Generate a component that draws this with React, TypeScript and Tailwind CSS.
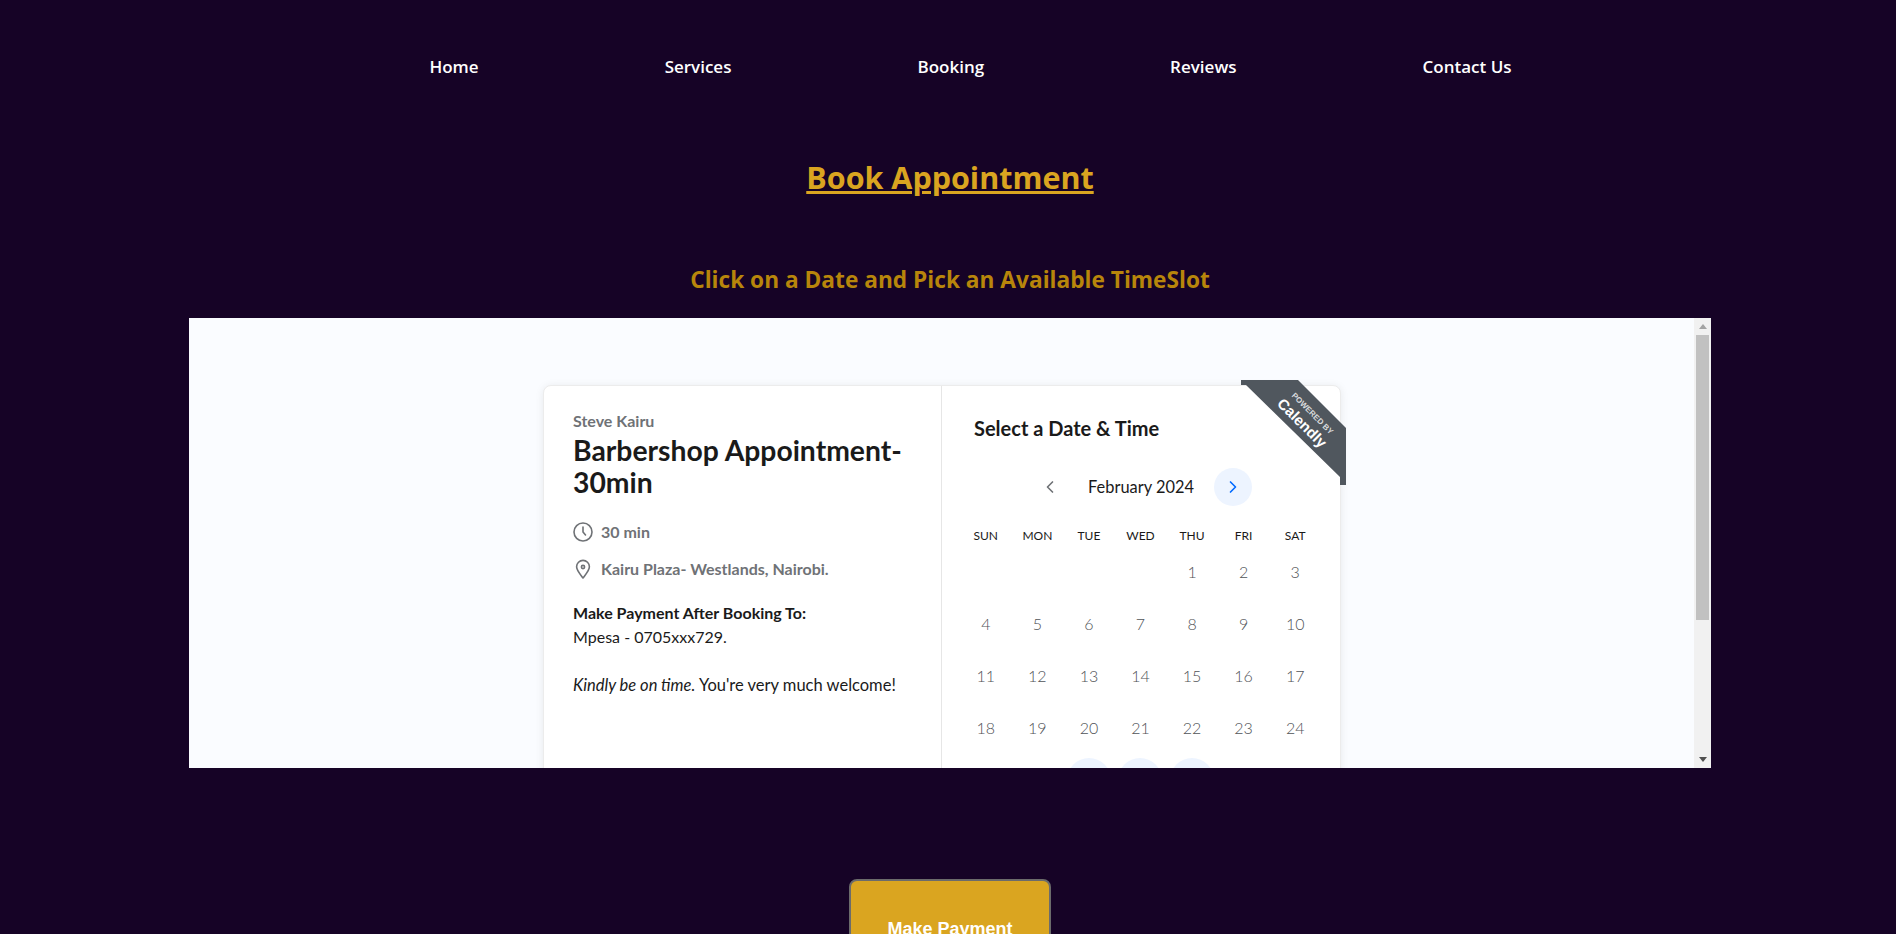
import { ChevronLeft, ChevronRight } from 'lucide-react';

const navLinks = ['Home', 'Services', 'Booking', 'Reviews', 'Contact Us'];
const weekDays = ['SUN', 'MON', 'TUE', 'WED', 'THU', 'FRI', 'SAT'];
const days = [
  '', '', '', '', '1', '2', '3',
  '4', '5', '6', '7', '8', '9', '10',
  '11', '12', '13', '14', '15', '16', '17',
  '18', '19', '20', '21', '22', '23', '24',
  '25', '26', '27', '28', '29', '', '',
];
const openDays = ['27', '28', '29'];

function Ribbon() {
  return (
    <div className="absolute left-[697px] top-[-6px] h-[105px] w-[105px]">
      <svg width="105" height="105" viewBox="0 0 105 105" className="block">
        <polygon points="0,0 57,0 105,48 105,105 99,105 99,97 5,5 0,5" fill="#50575e" />
      </svg>
      <div className="absolute left-[36px] top-[30px] w-[70px] rotate-45 text-center font-['Liberation_Sans',sans-serif] text-[8px] font-bold leading-[8px] text-[#d8dadc]">
        POWERED BY
      </div>
      <div className="absolute left-[26px] top-[35px] w-[70px] rotate-45 text-center font-['Liberation_Sans',sans-serif] text-[15px] font-bold leading-[16px] text-white">
        Calendly
      </div>
    </div>
  );
}

function DetailsPanel() {
  return (
    <div className="w-[398px] shrink-0 border-r border-[#e6e6e6] pl-[29px] pt-[25px]">
      <p className="text-[16px] font-bold leading-[20px] text-[#6f7276]">Steve Kairu</p>
      <h1 className="mt-[3px] w-[345px] text-[28.3px] font-bold leading-[32px] text-[#1a1a1a]">
        Barbershop Appointment-30min
      </h1>
      <div className="mt-[24px] flex items-center gap-[4px] text-[16px] font-bold leading-[20px] text-[#6f7276]">
        <svg width="20" height="20" viewBox="0 0 20 20" fill="none" stroke="#6f7276" strokeWidth="1.6" className="mr-[1px]">
          <circle cx="10" cy="10" r="9" />
          <path d="M10 5v5l2.500 3" strokeLinecap="round" strokeLinejoin="round" />
        </svg>
        <span className="ml-[3px]">30 min</span>
      </div>
      <div className="mt-[17px] flex items-center gap-[4px] text-[16px] font-bold leading-[20px] text-[#6f7276]">
        <svg width="20" height="20" viewBox="0 0 20 20" fill="none" stroke="#6f7276" strokeWidth="1.6" className="mr-[1px]">
          <path d="M10 19c-3-4-6.400-7.600-6.400-11.200a6.400 6.400 0 0 1 12.800 0C16.400 11.400 13 15 10 19z" strokeLinejoin="round" />
          <circle cx="10" cy="8" r="1.600" />
        </svg>
        <span className="ml-[3px]">Kairu Plaza- Westlands, Nairobi.</span>
      </div>
      <p className="mt-[23px] text-[16px] font-bold leading-[22px] text-[#1a1a1a]">Make Payment After Booking To:</p>
      <p className="mt-[1px] text-[16px] leading-[24px] text-[#1a1a1a]">Mpesa - 0705xxx729.</p>
      <p className="mt-[24px] text-[16.5px] leading-[24px] text-[#1a1a1a]">
        <em>Kindly be on time.</em> You're very much welcome!
      </p>
    </div>
  );
}

function CalendarPanel() {
  return (
    <div className="flex-1 pt-[31px]">
      <h2 className="pl-[32px] text-[20px] font-bold leading-[22px] text-[#1a1a1a]">Select a Date &amp; Time</h2>
      <div className="mt-[29px] flex h-[38px] items-center pl-[98px]">
        <ChevronLeft size={20} strokeWidth={2} className="mr-[16px] text-[#6f7276]" />
        <span className="w-[130px] text-center text-[16.4px] leading-[22px] text-[#1a1a1a]">February 2024</span>
        <span className="ml-[8px] flex h-[38px] w-[38px] items-center justify-center rounded-full bg-[#edf4ff]">
          <ChevronRight size={20} strokeWidth={2} className="text-[#0069ff]" />
        </span>
      </div>
      <div className="ml-[18px] mt-[20px] grid w-[361px] grid-cols-7 text-center text-[12px] leading-[20px] text-[#1a1a1a]">
        {weekDays.map(d => (
          <div key={d}>{d}</div>
        ))}
      </div>
      <div className="ml-[18px] grid w-[361px] grid-cols-7 text-center text-[16px] font-light text-[#505357]">
        {days.map((d, i) => (
          <div key={i} className="flex h-[52px] items-center justify-center">
            {d && (
              <span
                className={
                  openDays.includes(d)
                    ? 'flex h-[44px] w-[44px] items-center justify-center rounded-full bg-[#edf4ff] font-bold text-[#0069ff]'
                    : ''
                }
              >
                {d}
              </span>
            )}
          </div>
        ))}
      </div>
    </div>
  );
}

function CalendlyEmbed() {
  return (
    <div className="mx-[185px] flex h-[450px] overflow-hidden bg-[#fafcff] font-['Lato',sans-serif]">
      <div className="flex-1 overflow-hidden pl-[354px] pt-[67px]">
        <div className="relative flex h-[700px] w-[798px] rounded-t-[8px] border border-[#ececec] bg-white shadow-[0_1px_8px_rgba(0,0,0,0.08)]">
          <DetailsPanel />
          <CalendarPanel />
          <Ribbon />
        </div>
      </div>
      {/* fake scrollbar, same as the browser one in the iframe */}
      <div className="flex w-[17px] shrink-0 flex-col items-center bg-[#f1f1f1]">
        <svg width="8" height="5" viewBox="0 0 8 5" className="mt-[6px] shrink-0">
          <polygon points="4,0 8,5 0,5" fill="#a3a3a3" />
        </svg>
        <div className="mt-[6px] h-[285px] w-[13px] shrink-0 bg-[#c1c1c1]" />
        <div className="flex-1" />
        <svg width="8" height="5" viewBox="0 0 8 5" className="mb-[6px] shrink-0">
          <polygon points="0,0 8,0 4,5" fill="#505050" />
        </svg>
      </div>
    </div>
  );
}

export default function App() {
  return (
    <div className="h-[934px] overflow-hidden bg-[#160326] pl-[4px]">
      <nav className="flex justify-center gap-[186px] pl-[41px] pt-[55px] font-['Open_Sans',sans-serif] text-[17px] font-semibold leading-[24px] text-white">
        {navLinks.map(link => (
          <a key={link} href="#">
            {link}
          </a>
        ))}
      </nav>
      <h1 className="mt-[76px] text-center font-['Open_Sans',sans-serif] text-[30.5px] font-bold leading-[44px] text-[#daa520] underline">
        Book Appointment
      </h1>
      <h2 className="mt-[66px] text-center font-['Open_Sans',sans-serif] text-[22.7px] font-bold leading-[30px] text-[#b8860b]">
        Click on a Date and Pick an Available TimeSlot
      </h2>
      <div className="mt-[23px]">
        <CalendlyEmbed />
      </div>
      <div className="mt-[111px] flex justify-center">
        <button className="h-[96px] w-[202px] rounded-[8px] border-2 border-[#6b6b6b] bg-[#daa520] pt-[4px] font-['Liberation_Sans',sans-serif] text-[18px] font-bold text-white">
          Make Payment
        </button>
      </div>
    </div>
  );
}
